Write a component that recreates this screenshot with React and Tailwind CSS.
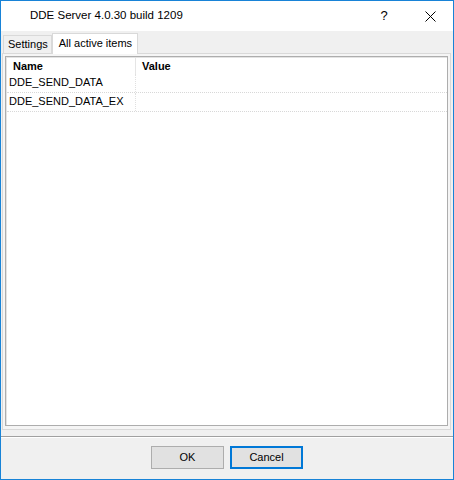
export default function App() {
  return (
    <div className="w-[454px] h-[480px] border border-[#1883d7] bg-[#f0f0f0] flex flex-col overflow-hidden" style={{ fontFamily: '"Liberation Sans", Arial, sans-serif' }}>
      {/* Title bar */}
      <div className="h-[30px] bg-white flex items-center shrink-0">
        <div className="pl-[29px] text-[11.5px] text-black flex-1">DDE Server 4.0.30 build 1209</div>
        <div className="w-[46px] text-center text-[13px] text-black">?</div>
        <div className="w-[46px] flex items-center justify-center">
          <svg width="11" height="11" viewBox="0 0 11 11">
            <path d="M0.5 0.5 L10.5 10.5 M10.5 0.5 L0.5 10.5" stroke="#000" strokeWidth="1" />
          </svg>
        </div>
      </div>
      {/* Tabs area */}
      <div className="flex-1 flex flex-col px-[1px] pt-[1px]">
        <div className="flex items-end h-[21px] pl-[1px]">
          <div className="h-[18px] pl-[4px] pr-[3px] border border-b-0 border-[#d9d9d9] bg-[#f0f0f0] text-[11px] leading-[17px] text-black">Settings</div>
          <div className="h-[21px] pl-[6px] pr-[5px] border border-b-0 border-[#d9d9d9] bg-white text-[11px] leading-[18px] text-black relative top-[1px] z-10">All active items</div>
        </div>
        <div className="h-[377px] border border-[#d9d9d9] bg-[#f5f5f5] p-[2px] pb-[3px] mr-[1px]">
          <div className="h-full border border-[#adadad] bg-white">
            <div className="h-full border border-[#e3e3e3] border-b-0 border-r-0">
              <div className="flex h-[16px] text-[11px] font-bold text-black">
                <div className="w-[129px] pl-[6px] leading-[17px] border-r border-[#e5e5e5]">Name</div>
                <div className="pl-[6px] leading-[17px]">Value</div>
              </div>
              {["DDE_SEND_DATA", "DDE_SEND_DATA_EX"].map((t) => (
                <div key={t} className="flex h-[19px] text-[11px] text-black border-b border-dotted border-[#d8d8d8]">
                  <div className="w-[129px] pl-[2px] leading-[17px] border-r border-dotted border-[#e0e0e0]">{t}</div>
                  <div className="flex-1" />
                </div>
              ))}
            </div>
          </div>
        </div>
      </div>
      {/* Separator */}
      <div className="h-[1px] bg-[#a0a0a0] mt-[4px]" />
      <div className="h-[1px] bg-white" />
      {/* Buttons */}
      <div className="h-[41px] flex items-start justify-center gap-[6px] pt-[8px]">
        <div className="w-[73px] h-[23px] border border-[#adadad] bg-[#e1e1e1] text-[11px] flex items-center justify-center text-black">OK</div>
        <div className="w-[73px] h-[23px] border-2 border-[#0078d7] bg-[#e1e1e1] text-[11px] flex items-center justify-center text-black">Cancel</div>
      </div>
    </div>
  );
}
